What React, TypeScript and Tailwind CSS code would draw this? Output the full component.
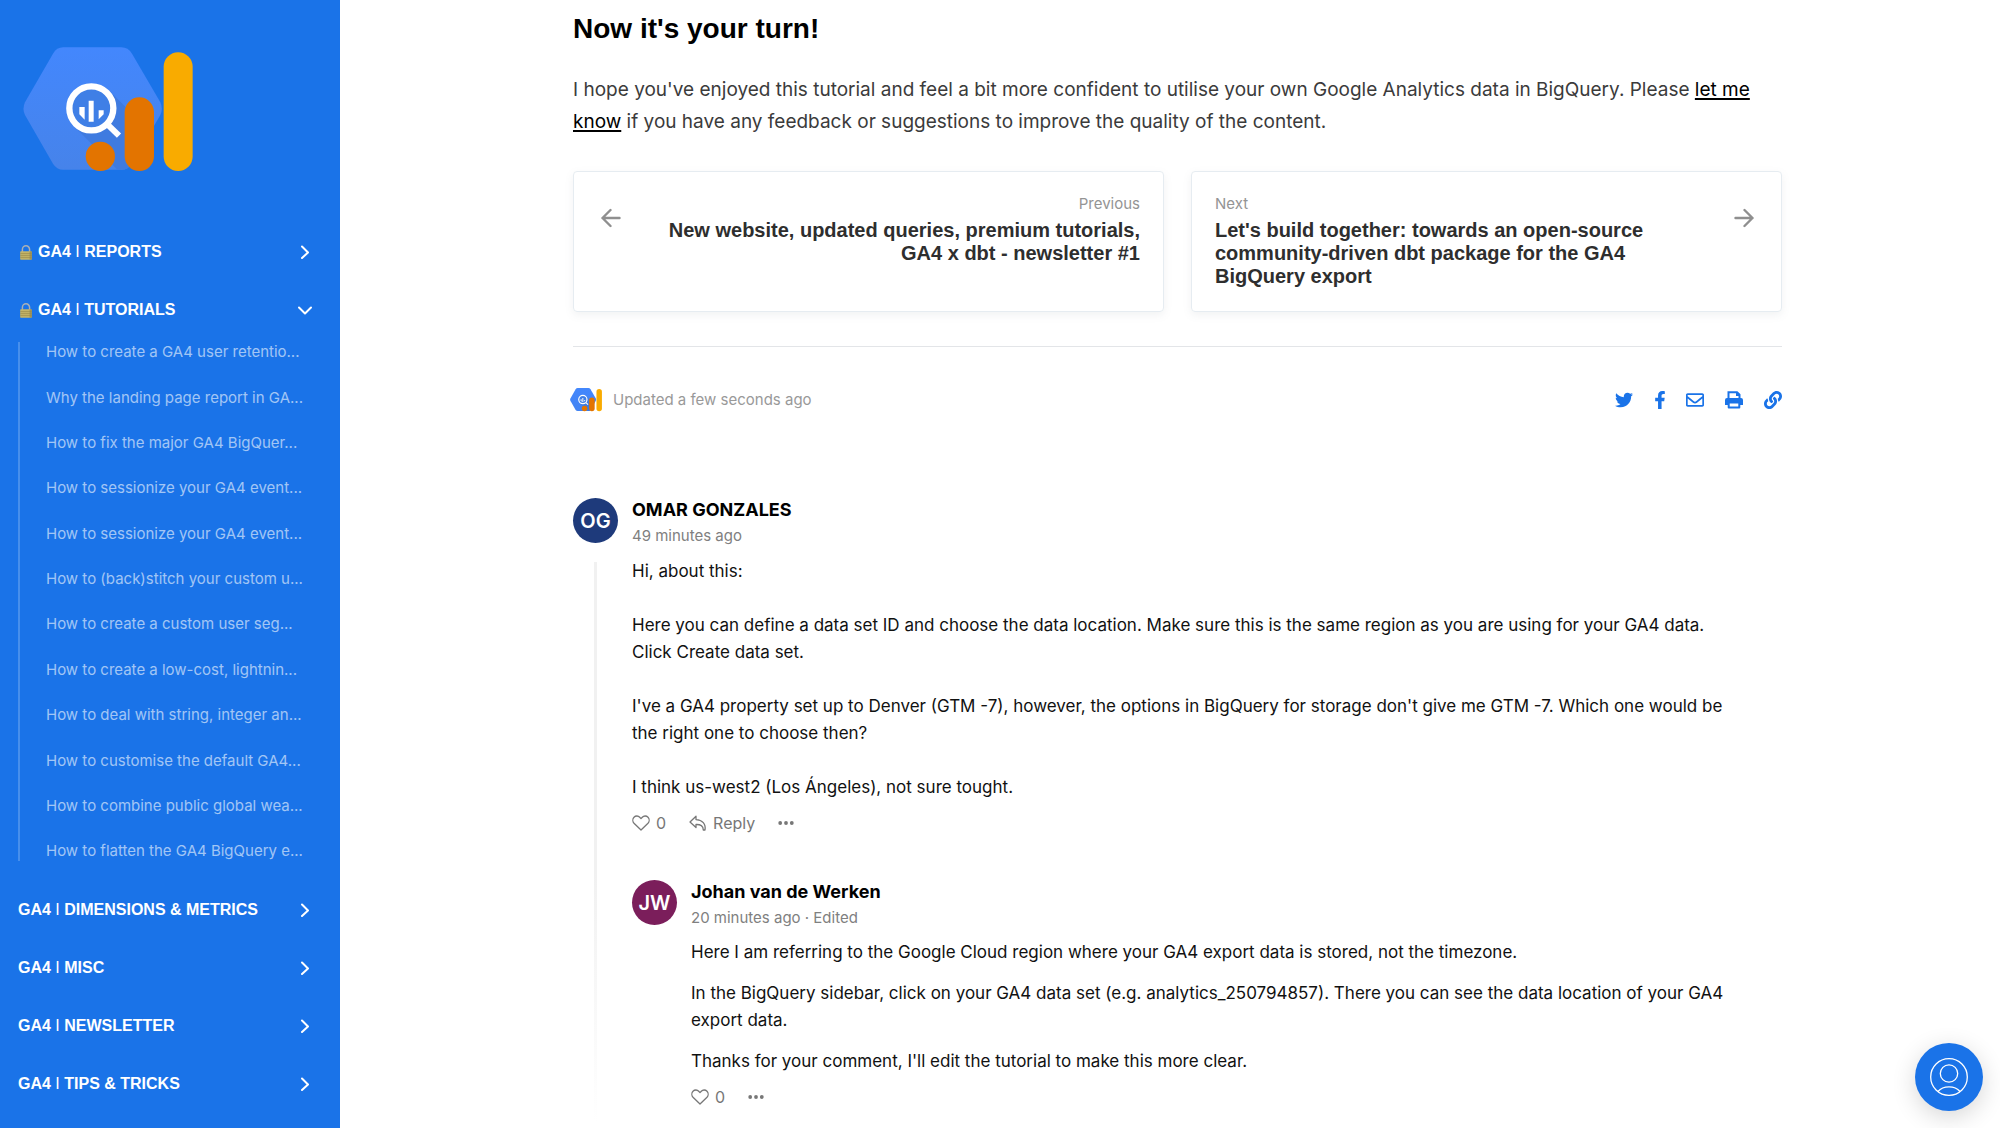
import React, { useId } from 'react';
import { FaTwitter, FaFacebookF, FaRegEnvelope, FaLink } from 'react-icons/fa';

const tutorials = [
  'How to create a GA4 user retentio...',
  'Why the landing page report in GA...',
  'How to fix the major GA4 BigQuer...',
  'How to sessionize your GA4 event...',
  'How to sessionize your GA4 event...',
  'How to (back)stitch your custom u...',
  'How to create a custom user seg...',
  'How to create a low-cost, lightnin...',
  'How to deal with string, integer an...',
  'How to customise the default GA4...',
  'How to combine public global wea...',
  'How to flatten the GA4 BigQuery e...',
];

function Logo({ className, vivid = false }: { className: string; vivid?: boolean }) {
  const id = useId();
  const hex =
    'M188 83H362Q382 83 394 102L479 248Q488 267 479 286L394 432Q383 450 362 450H188Q168 450 157 432L73 286Q64 267 73 248L157 102Q168 83 188 83Z';
  return (
    <svg viewBox="67 82 510 373" className={className} role="img" aria-label="GA4BigQuery">
      <defs>
        <linearGradient id={id} x1="0" y1="0" x2="0" y2="1">
          <stop offset="0" stopColor="#4387fd" />
          <stop offset="1" stopColor={vivid ? '#4283f2' : '#4683ea'} />
        </linearGradient>
        <clipPath id={id + 'c'}>
          <path d={hex} />
        </clipPath>
      </defs>
      <path d={hex} fill={`url(#${id})`} />
      <path d="M326 213L520 407V500H400L220 320Z" fill="#3f7be0" clipPath={`url(#${id}c)`} />
      <circle cx="272" cy="266" r="66" fill="#3f7fe6" stroke="#fff" strokeWidth="19" />
      <path d="M236 262h16v38l-16-16zM264 243h15v63h-15zM294 272h15v12l-15 15z" fill="#fff" />
      <path d="M321 315L355 348" stroke="#fff" strokeWidth="18" fill="none" />
      <circle cx="299" cy="410" r="44" fill="#e37400" />
      <rect x="372" y="233" width="88" height="221" rx="44" fill="#e37400" />
      <rect x="489" y="98" width="87" height="356" rx="43.5" fill="#f9ab00" />
    </svg>
  );
}

function Lock() {
  return (
    <svg viewBox="0 0 12 15" className="h-[15px] w-3 shrink-0" aria-hidden="true">
      <path d="M2.4 8V4.4a3.6 3.6 0 0 1 7.2 0V8" fill="none" stroke="#a9b0b6" strokeWidth="1.5" />
      <rect x="0.2" y="6.3" width="11.6" height="8.4" rx="0.6" fill="#c4b468" />
      <path d="M0.3 8.6h11.4M0.3 10.6h11.4M0.3 12.6h11.4" stroke="#9c8d4a" strokeWidth="0.7" />
      <rect x="9.6" y="6.4" width="2.2" height="8.2" fill="#93864e" opacity="0.7" />
    </svg>
  );
}

function Chevron({ open = false }: { open?: boolean }) {
  return (
    <svg viewBox="0 0 14 14" className="size-[14px] shrink-0" fill="none" stroke="#fff" strokeWidth="2" strokeLinecap="round" strokeLinejoin="round" aria-hidden="true">
      <path d={open ? 'M1 4.500L7 10.500L13 4.500' : 'M4 1.500L10 7.500L4 13'} />
    </svg>
  );
}

function Section({ label, locked = false, open = false }: { label: string; locked?: boolean; open?: boolean }) {
  return (
    <button aria-expanded={open} className="flex h-[58px] w-full cursor-pointer items-center justify-between pr-[8px] text-left font-['Liberation_Sans',Arial,sans-serif] text-base font-bold text-white">
      <span className="flex items-center">
        {locked && <span className="mr-[6px] ml-[2px]"><Lock /></span>}
        <span>
          GA4 <span className="font-normal">I</span> {label}
        </span>
      </span>
      <Chevron open={open} />
    </button>
  );
}

function PrintIcon() {
  return (
    <svg viewBox="0 0 18 18" className="size-[18px]" aria-hidden="true">
      <path d="M3.500 8V1.200H12L14.500 3.700V8" fill="none" stroke="currentColor" strokeWidth="2" />
      <path d="M11 1h1.500L15 3.500V5h-4z" fill="currentColor" />
      <path d="M2 7h14a2 2 0 0 1 2 2v5h-3.500v-1.800h-11V14H0V9a2 2 0 0 1 2-2z" fill="currentColor" />
      <path d="M3.700 11.500h10.600v5H3.700z" fill="#fff" stroke="currentColor" strokeWidth="2" strokeLinejoin="round" />
    </svg>
  );
}

function Heart() {
  return (
    <svg viewBox="0 0 18 16" className="h-4 w-[18px]" fill="none" stroke="currentColor" strokeWidth="1.300" strokeLinejoin="round" aria-hidden="true">
      <path d="M9 15L2 8.200C0.500 6.600 0.500 3.800 2 2.200C3.700 0.500 6.300 0.700 7.700 2.200L9 3.600L10.300 2.200C11.700 0.700 14.300 0.500 16 2.200C17.500 3.800 17.500 6.600 16 8.200Z" />
    </svg>
  );
}

function ReplyIcon() {
  return (
    <svg viewBox="0 0 18 16" className="h-4 w-[18px]" fill="none" stroke="currentColor" strokeWidth="1.300" strokeLinejoin="round" aria-hidden="true">
      <path d="M7 1.200L1 7L7 12.500V9.500C11.500 9.300 14.300 10.800 14.300 15H16C17 9 13.500 4.800 7 4.600Z" />
    </svg>
  );
}

function Dots() {
  return (
    <svg viewBox="0 0 16 4" className="h-1 w-4" fill="currentColor" aria-hidden="true">
      <circle cx="2.200" cy="2" r="1.900" />
      <circle cx="8" cy="2" r="1.900" />
      <circle cx="13.800" cy="2" r="1.900" />
    </svg>
  );
}

function Actions({ reply = false }: { reply?: boolean }) {
  return (
    <div className="mt-2 flex h-[27px] items-center gap-[23px] text-[16px] text-[#777]">
      <button className="flex cursor-pointer items-center gap-[6px]" aria-label="Like">
        <Heart />0
      </button>
      {reply && (
        <button className="flex cursor-pointer items-center gap-[6px]">
          <ReplyIcon />
          Reply
        </button>
      )}
      <button className="cursor-pointer" aria-label="More">
        <Dots />
      </button>
    </div>
  );
}

function Author({ name, meta }: { name: string; meta: string }) {
  return (
    <header>
      <h4 className="text-[18px] leading-6 font-bold text-black">{name}</h4>
      <p className="mt-[2px] text-[15px] leading-6 text-[#808080]">{meta}</p>
    </header>
  );
}

export default function App() {
  return (
    <div className="flex min-h-screen bg-white font-[Inter,'Noto_Sans',sans-serif]">
      <aside className="w-[340px] shrink-0 bg-[#1a73e8] pr-5 pl-[18px]">
        <a href="#home" className="mt-[47px] ml-[5px] block w-[170px]">
          <Logo className="w-[170px]" />
        </a>
        <nav className="mt-[52px]">
          <Section label="REPORTS" locked />
          <Section label="TUTORIALS" locked open />
          <ul className="mt-[3px] flex min-h-[519px] flex-col justify-between border-l-2 border-white/20 pl-[26px] text-[15px] leading-5 text-white/60">
            {tutorials.map((t, i) => (
              <li key={i}>
                <a href={`#tutorial-${i + 1}`} className="block whitespace-nowrap">{t}</a>
              </li>
            ))}
          </ul>
          <div className="mt-[20px]">
            <Section label="DIMENSIONS & METRICS" />
            <Section label="MISC" />
            <Section label="NEWSLETTER" />
            <Section label="TIPS & TRICKS" />
          </div>
        </nav>
      </aside>

      <main className="min-w-0 flex-1 pr-[218px] pl-[233px]">
        <h2 className="pt-[11px] font-['Liberation_Sans',Arial,sans-serif] text-[28px] leading-9 font-bold text-black">Now it's your turn!</h2>
        <p className="mt-[27px] text-[19px] leading-8 text-[#3b3b3b]">
          I hope you've enjoyed this tutorial and feel a bit more confident to utilise your own Google Analytics data in BigQuery. Please{' '}
          <a href="#contact" className="text-black underline decoration-2 underline-offset-2">let me know</a> if you have any feedback or suggestions to
          improve the quality of the content.
        </p>

        <div className="mt-[33px] grid grid-cols-2 gap-[27px] font-['Liberation_Sans',Arial,sans-serif]">
          <a href="#previous" className="flex min-h-[141px] items-start justify-between rounded border border-[#e6ecf1] px-[23px] pt-[21px] shadow-[0_3px_8px_rgba(116,129,141,0.1)]">
            <svg viewBox="0 0 20 20" className="mt-[15px] ml-1 size-5 shrink-0" fill="none" stroke="#8f8f8f" strokeWidth="2.400" strokeLinecap="round" strokeLinejoin="round" aria-hidden="true">
              <path d="M18.500 10H1.500M9.500 2L1.500 10L9.500 18" />
            </svg>
            <span className="text-right">
              <span className="block font-[Inter,sans-serif] text-[15px] leading-[22px] text-[#949494]">Previous</span>
              <span className="mt-1 block text-[20px] leading-[23px] font-bold text-[#2e2e2e]">
                New website, updated queries, premium tutorials,
                <br />
                GA4 x dbt - newsletter #1
              </span>
            </span>
          </a>
          <a href="#next" className="flex min-h-[141px] items-start justify-between rounded border border-[#e6ecf1] px-[23px] pt-[21px] shadow-[0_3px_8px_rgba(116,129,141,0.1)]">
            <span>
              <span className="block font-[Inter,sans-serif] text-[15px] leading-[22px] text-[#949494]">Next</span>
              <span className="mt-1 block max-w-[450px] text-[20px] leading-[23px] font-bold text-[#2e2e2e]">
                Let's build together: towards an open-source community-driven dbt package for the GA4 BigQuery export
              </span>
            </span>
            <svg viewBox="0 0 20 20" className="mt-[15px] mr-1 size-5 shrink-0" fill="none" stroke="#8f8f8f" strokeWidth="2.400" strokeLinecap="round" strokeLinejoin="round" aria-hidden="true">
              <path d="M1.500 10H18.500M10.500 2L18.500 10L10.500 18" />
            </svg>
          </a>
        </div>

        <hr className="mt-[34px] border-t border-[#e3e5e8]" />

        <div className="mt-[41px] flex h-6 items-center justify-between">
          <div className="-ml-[3px] flex items-center gap-[11px] text-[15px] text-[#999]">
            <Logo className="w-8" vivid />
            Updated a few seconds ago
          </div>
          <div className="flex items-center gap-[21px] text-[18px] text-[#1a73e8]">
            <a href="#twitter" aria-label="Twitter"><FaTwitter /></a>
            <a href="#facebook" aria-label="Facebook" className="flex w-[11px] justify-center"><FaFacebookF className="shrink-0" /></a>
            <a href="#mail" aria-label="Email"><FaRegEnvelope /></a>
            <a href="#print" aria-label="Print"><PrintIcon /></a>
            <a href="#link" aria-label="Copy link"><FaLink /></a>
          </div>
        </div>

        <article className="mt-[86px] flex gap-[14px]">
          <div className="flex w-[45px] shrink-0 flex-col items-center">
            <span className="flex size-[45px] shrink-0 items-center justify-center rounded-full bg-[#1e3a7b] text-[20px] font-semibold text-white">OG</span>
            <div className="mt-[19px] w-[3px] flex-1 bg-linear-to-b from-[#f1f1f1] from-55% to-white" />
          </div>
          <div className="min-w-0 flex-1 pb-[14px]">
            <Author name="OMAR GONZALES" meta="49 minutes ago" />
            <div className="mt-[10px] text-[17px] leading-[27px] text-[#111]">
              <p>Hi, about this:</p>
              <p className="mt-[27px]">
                Here you can define a data set ID and choose the data location. Make sure this is the same region as you are using for your GA4 data.
                <br />
                Click Create data set.
              </p>
              <p className="mt-[27px]">
                I've a GA4 property set up to Denver (GTM -7), however, the options in BigQuery for storage don't give me GTM -7. Which one would be
                <br />
                the right one to choose then?
              </p>
              <p className="mt-[27px]">I think us-west2 (Los Ángeles), not sure tought.</p>
            </div>
            <Actions reply />

            <article className="mt-[44px] flex gap-[14px]">
              <span className="flex size-[45px] shrink-0 items-center justify-center rounded-full bg-[#7b1e5b] text-[20px] font-semibold text-white">JW</span>
              <div className="min-w-0 flex-1">
                <Author name="Johan van de Werken" meta="20 minutes ago · Edited" />
                <div className="mt-[9px] text-[17px] leading-[27px] text-[#111]">
                  <p>Here I am referring to the Google Cloud region where your GA4 export data is stored, not the timezone.</p>
                  <p className="mt-[14px]">
                    In the BigQuery sidebar, click on your GA4 data set (e.g. analytics_250794857). There you can see the data location of your GA4
                    <br />
                    export data.
                  </p>
                  <p className="mt-[14px]">Thanks for your comment, I'll edit the tutorial to make this more clear.</p>
                </div>
                <Actions />
              </div>
            </article>
          </div>
        </article>
      </main>

      <button aria-label="Account" className="fixed right-[17px] bottom-[17px] flex size-[68px] cursor-pointer items-center justify-center rounded-full bg-[#1a73e8] shadow-[0_6px_24px_rgba(0,0,0,0.16)]">
        <svg viewBox="0 0 38 38" className="size-[38px]" fill="none" stroke="#fff" strokeWidth="1.300" aria-hidden="true">
          <circle cx="19" cy="19" r="18.300" />
          <circle cx="19" cy="15.500" r="8.700" />
          <path d="M8 33.500C10.500 30.500 14.500 28.800 19 28.800S27.500 30.500 30 33.500" />
        </svg>
      </button>
    </div>
  );
}
